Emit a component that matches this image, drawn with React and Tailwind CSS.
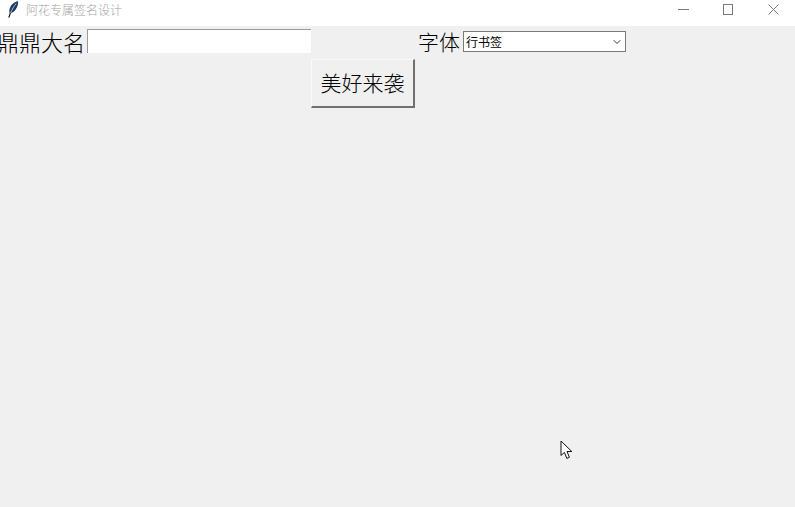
import React from 'react';
import { ChevronDown } from 'lucide-react';

const cjk = { fontFamily: '"Noto Sans CJK SC", "Liberation Sans", sans-serif' };

// Feather icon from the Tk title bar
const Feather = () => (
  <svg width="12" height="17" viewBox="0 0 12 17">
    <path d="M11 0.3C7 0.8 3.2 4.6 2.4 8.8C2.1 10.6 2.3 11.8 3.2 12.5C6.8 11.6 9.6 8 10.6 4.5C11 3 11.3 1.4 11 0.3Z" fill="#1c3764" />
    <path d="M9.2 2.5C7 5 5 8.5 3.6 12" stroke="#a9c4e4" strokeWidth="1" fill="none" />
    <path d="M3.4 12L1.8 16.6" stroke="#111" strokeWidth="1.2" fill="none" />
  </svg>
);

const Cursor = () => (
  <svg width="13" height="20" viewBox="0 0 13 20">
    <path d="M1 1V15.5L4.4 12.4L6.8 18.4L9.4 17.3L7 11.5H11.8Z" fill="#fff" stroke="#111" strokeWidth="1" strokeLinejoin="round" />
  </svg>
);

export default function App() {
  return (
    <div className="relative w-[795px] h-[507px] overflow-hidden bg-[#f0f0f0] text-black" style={cjk}>
      {/* Title bar */}
      <div className="flex items-start h-[26px] bg-white">
        <div className="ml-[7px] mt-[1px] w-[12px] flex"><Feather /></div>
        <span className="ml-[7px] mt-[3px] text-[12px] leading-[13px] text-[#a3a3a3] font-light">阿花专属签名设计</span>
        <div className="ml-auto flex items-start text-[#7a7a7a]">
          <svg width="11" height="11" viewBox="0 0 11 11" className="mt-[4px] mr-[34px]">
            <path d="M0 5.5H11" stroke="currentColor" />
          </svg>
          <svg width="10" height="11" viewBox="0 0 10 11" className="mt-[4px] mr-[35px]">
            <rect x="0.5" y="0.5" width="9" height="10" fill="none" stroke="currentColor" />
          </svg>
          <svg width="11" height="11" viewBox="0 0 11 11" className="mt-[4px] mr-[16px]">
            <path d="M0.5 0.5L10.5 10.5M10.5 0.5L0.5 10.5" stroke="currentColor" fill="none" />
          </svg>
        </div>
      </div>

      {/* Form row */}
      <div className="flex items-start h-[33px] pt-[3px]">
        <span className="-ml-[3px] w-[87px] text-[22px] leading-[24px] whitespace-nowrap font-light">鼎鼎大名</span>
        <input
          className="ml-[3px] w-[224px] h-[24px] bg-white border-t border-l border-[#9a9a9a] outline-none"
          defaultValue=""
        />
        <span className="ml-[107px] w-[42px] text-[21px] leading-[24px] whitespace-nowrap font-light">字体</span>
        <div className="ml-[3px] mt-[2px] w-[163px] h-[21px] flex items-center justify-between bg-white border border-[#7a7a7a] pl-[2px] pr-[2px]">
          <span className="text-[12px] leading-none">行书签</span>
          <ChevronDown size={12} strokeWidth={1.8} className="text-[#222]" />
        </div>
      </div>

      {/* Submit button */}
      <div className="pl-[311px]">
        <button className="w-[104px] h-[49px] pb-[2px] bg-[#f0f0f0] border-t border-l border-[#fafafa] border-r-2 border-b-2 border-r-[#707070] border-b-[#707070] text-[21px] leading-none font-light">
          美好来袭
        </button>
      </div>

      <div className="absolute left-[560px] top-[440px]"><Cursor /></div>
    </div>
  );
}
